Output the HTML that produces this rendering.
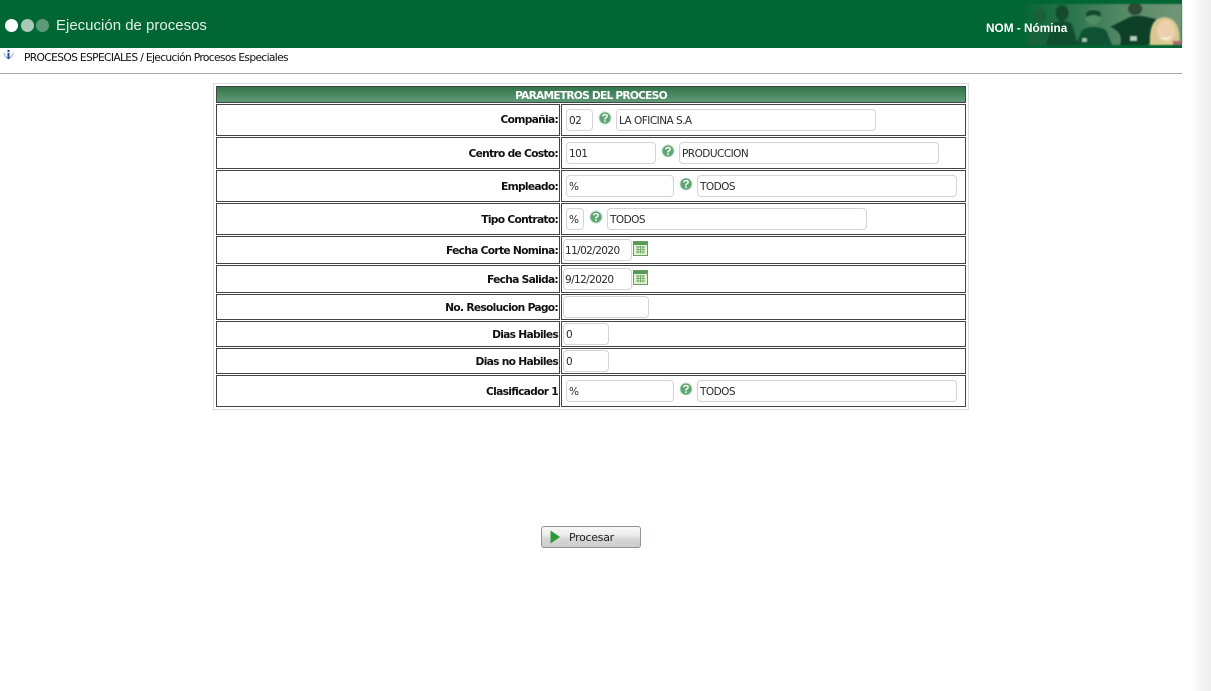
<!DOCTYPE html>
<html lang="es">
<head>
<meta charset="utf-8">
<title>Ejecución de procesos</title>
<style>
html,body{margin:0;padding:0;background:#fff;width:1211px;height:691px;overflow:hidden}
body{position:relative;font-family:"Liberation Sans",sans-serif;color:#000}
.a{position:absolute;box-sizing:border-box}
.cell{position:absolute;box-sizing:border-box;border:1px solid #444}
.lbl{position:absolute;left:216px;width:342px;text-align:right;font-weight:bold;font-size:10.7px;line-height:14px;white-space:nowrap;color:#111;font-family:"DejaVu Sans",sans-serif;letter-spacing:-.72px}
.in{position:absolute;box-sizing:border-box;background:#fff;border:1px solid #d4d4d4;border-radius:4px;font-size:10.5px;line-height:12px;padding:5px 0 0 2px;color:#2a2a2a;white-space:nowrap;font-family:"DejaVu Sans",sans-serif;letter-spacing:-.53px}
svg{position:absolute;display:block}
</style>
</head>
<body>
<!-- header -->
<div class="a" style="left:0;top:0;width:1182px;height:48px;background:#006633"></div>
<div class="a" style="left:5px;top:19px;width:13px;height:13px;border-radius:50%;background:#fff"></div>
<div class="a" style="left:21px;top:19px;width:13px;height:13px;border-radius:50%;background:#a9c9b6"></div>
<div class="a" style="left:36px;top:19px;width:13px;height:13px;border-radius:50%;background:#5c9a78"></div>
<div class="a" style="left:56px;top:16px;font-size:15px;line-height:19px;color:#e2efe8;white-space:nowrap">Ejecución de procesos</div>

<svg style="left:1020px;top:4px;filter:blur(.7px)" width="162" height="41" viewBox="0 0 162 41">
  <defs>
    <linearGradient id="bg" x1="0" x2="1" y1="0" y2="0">
      <stop offset="0" stop-color="#006633"/>
      <stop offset=".12" stop-color="#14693f"/>
      <stop offset=".35" stop-color="#2f7650"/>
      <stop offset=".65" stop-color="#578a67"/>
      <stop offset="1" stop-color="#719678"/>
    </linearGradient>
  </defs>
  <rect width="162" height="41" fill="url(#bg)"/>
  <ellipse cx="20" cy="12" rx="6" ry="7" fill="#1a5f3a"/>
  <path d="M6 41 L12 24 Q20 18 28 24 L36 41Z" fill="#17623a"/>
  <ellipse cx="42" cy="9" rx="6.5" ry="8" fill="#144a2c"/>
  <path d="M26 41 L32 20 Q42 14 52 20 L58 41Z" fill="#0f4d2e"/>
  <ellipse cx="73" cy="13" rx="8" ry="8" fill="#4f8c66"/>
  <path d="M73 6 Q82 6 81 13 Q74 9 66 13 Q65 6 73 6Z" fill="#144a2c"/>
  <path d="M56 41 L62 26 Q74 20 86 26 L92 41Z" fill="#0f5233"/>
  <path d="M90 23 L106 15 Q112 11 122 12 L136 15 L138 30 L128 41 L100 41 Q104 28 90 23Z" fill="#0e4028"/>
  <ellipse cx="115" cy="5" rx="7" ry="6" fill="#2f4a34"/>
  <rect x="110" y="32" width="7" height="5" fill="#b7cdbb"/>
  <rect x="62" y="34" width="5" height="4" fill="#a5c2aa"/>
  <path d="M130 41 Q129 22 136 16 Q146 10 154 17 Q161 24 159 41Z" fill="#d8c88f"/>
  <ellipse cx="146" cy="27" rx="9" ry="11" fill="#ecd0ae"/>
  <path d="M141 32 Q146 36 151 32 L150 34 Q146 37 142 34Z" fill="#fff"/>
  <rect x="153" y="37" width="8" height="4" fill="#a8666a"/>
</svg>
<div class="a" style="left:986px;top:21px;font-size:11.8px;line-height:14px;font-weight:bold;color:#fff;white-space:nowrap">NOM - Nómina</div>

<!-- breadcrumb -->
<svg style="left:2px;top:49px" width="13" height="13" viewBox="0 0 13 13">
  <path d="M1 3 Q2 9 6.5 10.5 Q11 9 12 3 L10 5 Q9 8 6.5 8 Q4 8 3 5Z" fill="#a9bfdc"/>
  <circle cx="6.5" cy="2" r="1.2" fill="#1f4f9a"/>
  <rect x="5.5" y="4" width="2" height="6" fill="#1f4f9a"/>
</svg>
<div class="a" style="left:24px;top:51px;font-family:'DejaVu Sans',sans-serif;font-size:10.7px;line-height:13px;letter-spacing:-.66px;color:#111;white-space:nowrap">PROCESOS ESPECIALES / Ejecución Procesos Especiales</div>
<div class="a" style="left:0;top:73px;width:1182px;height:1px;background:#a8a8a8"></div>

<!-- scrollbar shadow -->
<div class="a" style="left:1192px;top:0;width:19px;height:691px;background:linear-gradient(to right,#fff,#f2f2f2 60%,#eeeeee)"></div>

<!-- table outer -->
<div class="a" style="left:213px;top:83px;width:756px;height:327px;border:1px solid #dedede"></div>

<!-- title bar -->
<div class="a" style="left:216px;top:86px;width:750px;height:17px;border:1px solid #444;background:linear-gradient(#33764c,#5f9a76);color:#fff;font-size:10.7px;font-weight:bold;line-height:17px;text-align:center;font-family:'DejaVu Sans',sans-serif;letter-spacing:-.8px">PARAMETROS DEL PROCESO</div>

<!-- rows -->
<div class="cell" style="left:216px;top:104px;width:344px;height:32px"></div><div class="cell" style="left:561px;top:104px;width:405px;height:32px"></div>
<div class="cell" style="left:216px;top:137px;width:344px;height:32px"></div><div class="cell" style="left:561px;top:137px;width:405px;height:32px"></div>
<div class="cell" style="left:216px;top:170px;width:344px;height:32px"></div><div class="cell" style="left:561px;top:170px;width:405px;height:32px"></div>
<div class="cell" style="left:216px;top:203px;width:344px;height:32px"></div><div class="cell" style="left:561px;top:203px;width:405px;height:32px"></div>
<div class="cell" style="left:216px;top:236px;width:344px;height:28px"></div><div class="cell" style="left:561px;top:236px;width:405px;height:28px"></div>
<div class="cell" style="left:216px;top:265px;width:344px;height:28px"></div><div class="cell" style="left:561px;top:265px;width:405px;height:28px"></div>
<div class="cell" style="left:216px;top:294px;width:344px;height:26px"></div><div class="cell" style="left:561px;top:294px;width:405px;height:26px"></div>
<div class="cell" style="left:216px;top:321px;width:344px;height:26px"></div><div class="cell" style="left:561px;top:321px;width:405px;height:26px"></div>
<div class="cell" style="left:216px;top:348px;width:344px;height:26px"></div><div class="cell" style="left:561px;top:348px;width:405px;height:26px"></div>
<div class="cell" style="left:216px;top:375px;width:344px;height:32px"></div><div class="cell" style="left:561px;top:375px;width:405px;height:32px"></div>

<!-- labels -->
<div class="lbl" style="top:113px">Compañia:</div>
<div class="lbl" style="top:147px">Centro de Costo:</div>
<div class="lbl" style="top:180px">Empleado:</div>
<div class="lbl" style="top:213px">Tipo Contrato:</div>
<div class="lbl" style="top:244px">Fecha Corte Nomina:</div>
<div class="lbl" style="top:273px">Fecha Salida:</div>
<div class="lbl" style="top:301px">No. Resolucion Pago:</div>
<div class="lbl" style="top:328px">Dias Habiles</div>
<div class="lbl" style="top:355px">Dias no Habiles</div>
<div class="lbl" style="top:385px">Clasificador 1</div>

<!-- inputs -->
<div class="in" style="left:566px;top:109px;width:27px;height:22px">02</div>
<div class="in" style="left:616px;top:109px;width:260px;height:22px">LA OFICINA S.A</div>
<div class="in" style="left:566px;top:142px;width:90px;height:22px">101</div>
<div class="in" style="left:679px;top:142px;width:260px;height:22px">PRODUCCION</div>
<div class="in" style="left:566px;top:175px;width:108px;height:22px">%</div>
<div class="in" style="left:697px;top:175px;width:260px;height:22px">TODOS</div>
<div class="in" style="left:566px;top:208px;width:18px;height:22px">%</div>
<div class="in" style="left:607px;top:208px;width:260px;height:22px">TODOS</div>
<div class="in" style="left:563px;top:239px;width:69px;height:22px;padding-left:1px;letter-spacing:-.6px">11/02/2020</div>
<div class="in" style="left:563px;top:268px;width:69px;height:22px;padding-left:1px;letter-spacing:-.6px">9/12/2020</div>
<div class="in" style="left:563px;top:296px;width:86px;height:22px"></div>
<div class="in" style="left:563px;top:323px;width:46px;height:22px">0</div>
<div class="in" style="left:563px;top:350px;width:46px;height:22px">0</div>
<div class="in" style="left:566px;top:380px;width:108px;height:22px">%</div>
<div class="in" style="left:697px;top:380px;width:260px;height:22px">TODOS</div>

<!-- help icons -->
<svg style="left:598px;top:111px" width="14" height="14" viewBox="0 0 14 14"><circle cx="7" cy="7" r="6" fill="#5fa572" stroke="#c4dfca"/><path d="M4.8 5.4 Q5 3.6 7 3.6 Q9.2 3.6 9.2 5.3 Q9.2 6.4 7 7.4 V8.6" fill="none" stroke="#fff" stroke-width="1.4"/><rect x="6.2" y="9.4" width="1.6" height="1.5" fill="#fff"/></svg>
<svg style="left:661px;top:144px" width="14" height="14" viewBox="0 0 14 14"><circle cx="7" cy="7" r="6" fill="#5fa572" stroke="#c4dfca"/><path d="M4.8 5.4 Q5 3.6 7 3.6 Q9.2 3.6 9.2 5.3 Q9.2 6.4 7 7.4 V8.6" fill="none" stroke="#fff" stroke-width="1.4"/><rect x="6.2" y="9.4" width="1.6" height="1.5" fill="#fff"/></svg>
<svg style="left:679px;top:177px" width="14" height="14" viewBox="0 0 14 14"><circle cx="7" cy="7" r="6" fill="#5fa572" stroke="#c4dfca"/><path d="M4.8 5.4 Q5 3.6 7 3.6 Q9.2 3.6 9.2 5.3 Q9.2 6.4 7 7.4 V8.6" fill="none" stroke="#fff" stroke-width="1.4"/><rect x="6.2" y="9.4" width="1.6" height="1.5" fill="#fff"/></svg>
<svg style="left:589px;top:210px" width="14" height="14" viewBox="0 0 14 14"><circle cx="7" cy="7" r="6" fill="#5fa572" stroke="#c4dfca"/><path d="M4.8 5.4 Q5 3.6 7 3.6 Q9.2 3.6 9.2 5.3 Q9.2 6.4 7 7.4 V8.6" fill="none" stroke="#fff" stroke-width="1.4"/><rect x="6.2" y="9.4" width="1.6" height="1.5" fill="#fff"/></svg>
<svg style="left:679px;top:382px" width="14" height="14" viewBox="0 0 14 14"><circle cx="7" cy="7" r="6" fill="#5fa572" stroke="#c4dfca"/><path d="M4.8 5.4 Q5 3.6 7 3.6 Q9.2 3.6 9.2 5.3 Q9.2 6.4 7 7.4 V8.6" fill="none" stroke="#fff" stroke-width="1.4"/><rect x="6.2" y="9.4" width="1.6" height="1.5" fill="#fff"/></svg>

<!-- calendar icons -->
<svg style="left:633px;top:241px" width="15" height="15" viewBox="0 0 15 15"><rect x=".5" y=".5" width="14" height="14" fill="#e4f0d4" stroke="#63a05e"/><rect x="1" y="1" width="13" height="3" fill="#569a56"/><path d="M3 6H12M3 8.5H12M3 11H12M5 5V12.5M7.5 5V12.5M10 5V12.5" stroke="#74ad6c" stroke-width="1"/></svg>
<svg style="left:633px;top:270px" width="15" height="15" viewBox="0 0 15 15"><rect x=".5" y=".5" width="14" height="14" fill="#e4f0d4" stroke="#63a05e"/><rect x="1" y="1" width="13" height="3" fill="#569a56"/><path d="M3 6H12M3 8.5H12M3 11H12M5 5V12.5M7.5 5V12.5M10 5V12.5" stroke="#74ad6c" stroke-width="1"/></svg>

<!-- button -->
<div class="a" style="left:541px;top:526px;width:100px;height:22px;border:1px solid #8f9497;border-radius:3px;background:linear-gradient(#f8f8f8 0%,#ececec 40%,#d6d6d6 60%,#cccccc 100%)"></div>
<svg style="left:549px;top:530px" width="12" height="14" viewBox="0 0 12 14"><path d="M1.5 0.5 L11 7 L1.5 13.5Z" fill="#2a9a35"/></svg>
<div class="a" style="left:569px;top:531px;font-family:'DejaVu Sans',sans-serif;font-size:11px;line-height:13px;letter-spacing:-.3px;color:#222">Procesar</div>
</body>
</html>
